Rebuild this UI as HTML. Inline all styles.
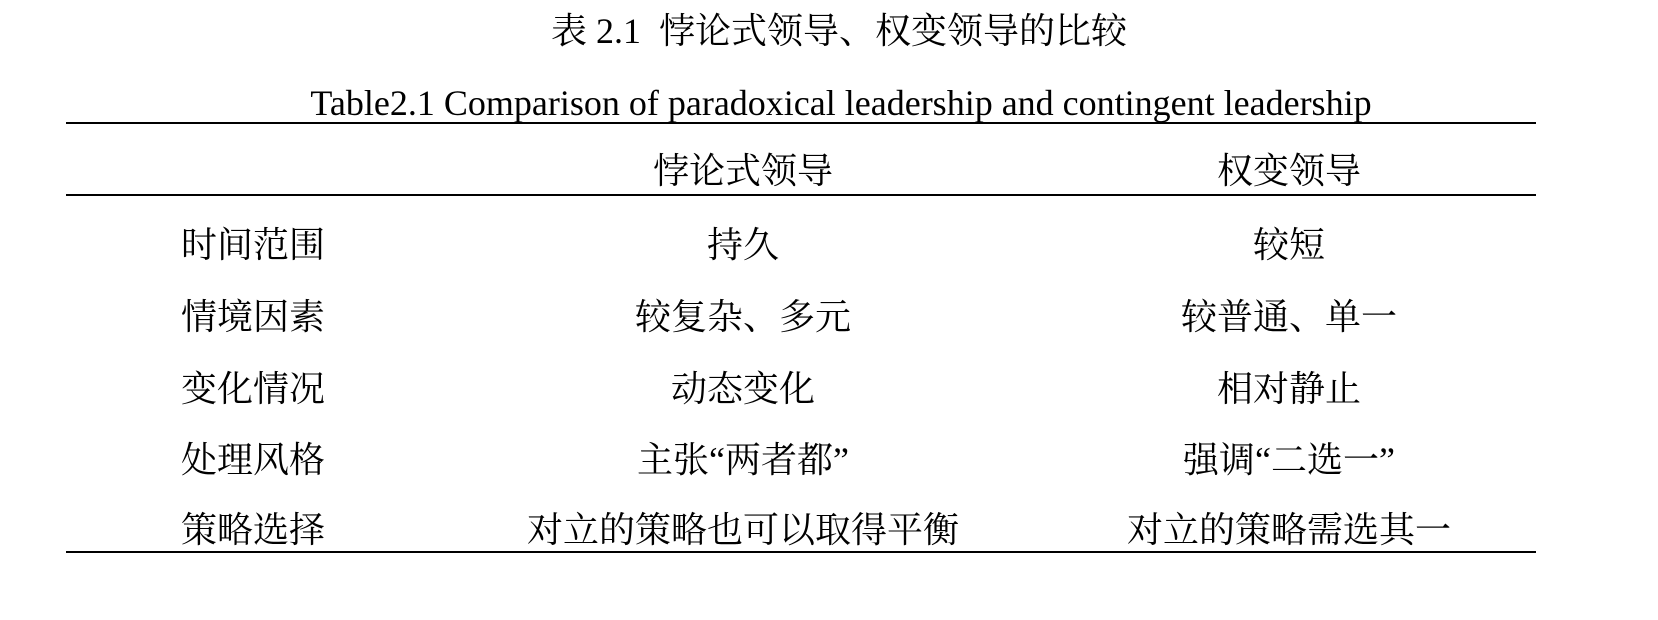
<!DOCTYPE html>
<html><head><meta charset="utf-8"><style>
body{margin:0;width:1658px;height:620px;background:#fff;position:relative;overflow:hidden;font-family:"Liberation Serif","Noto Serif CJK SC",serif;color:#000;font-size:36px}
.t{position:absolute;white-space:nowrap;line-height:1;transform:translate(-50%,-50%)}
.l{position:absolute;white-space:nowrap;line-height:1;transform:translateY(-50%);left:181px}
.h{position:absolute;left:66px;width:1470px;height:2px;background:#000}
</style></head><body>
<div class="t" style="left:839px;top:31px">表 2.1&nbsp; 悖论式领导、权变领导的比较</div>
<div class="t" style="left:841px;top:103px">Table2.1 Comparison of paradoxical leadership and contingent leadership</div>
<div class="h" style="top:122px"></div>
<div class="t" style="left:743px;top:171px">悖论式领导</div>
<div class="t" style="left:1289px;top:171px">权变领导</div>
<div class="h" style="top:194px"></div>
<div class="l" style="top:245px">时间范围</div><div class="t" style="left:743px;top:245px">持久</div><div class="t" style="left:1289px;top:245px">较短</div>
<div class="l" style="top:317px">情境因素</div><div class="t" style="left:743px;top:317px">较复杂、多元</div><div class="t" style="left:1289px;top:317px">较普通、单一</div>
<div class="l" style="top:389px">变化情况</div><div class="t" style="left:743px;top:389px">动态变化</div><div class="t" style="left:1289px;top:389px">相对静止</div>
<div class="l" style="top:460px">处理风格</div><div class="t" style="left:743px;top:460px">主张“两者都”</div><div class="t" style="left:1289px;top:460px">强调“二选一”</div>
<div class="l" style="top:530px">策略选择</div><div class="t" style="left:743px;top:530px">对立的策略也可以取得平衡</div><div class="t" style="left:1289px;top:530px">对立的策略需选其一</div>
<div class="h" style="top:551px"></div>
</body></html>
